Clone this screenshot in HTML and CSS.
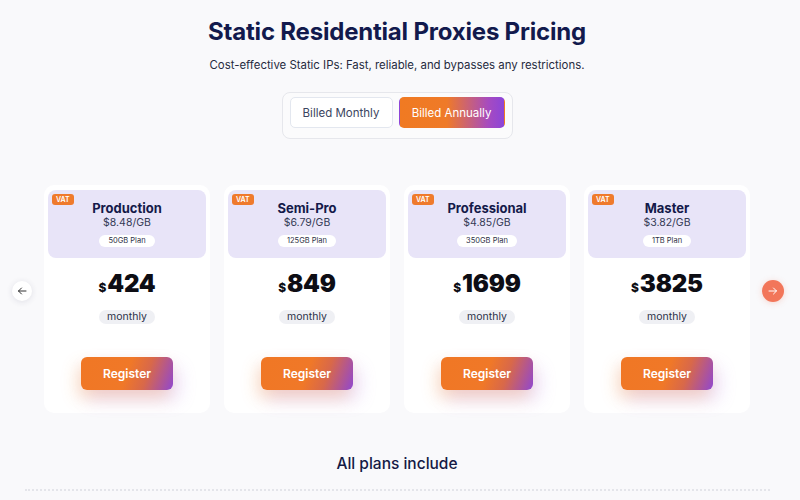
FILE: index.html
```html
<!DOCTYPE html>
<html lang="en">
<head>
<meta charset="utf-8">
<title>Static Residential Proxies Pricing</title>
<link rel="stylesheet" href="styles.css">
</head>
<body>
<main class="pricing">
  <h1 class="title">Static Residential Proxies Pricing</h1>
  <p class="subtitle">Cost-effective Static IPs: Fast, reliable, and bypasses any restrictions.</p>

  <div class="toggle">
    <button class="toggle-btn monthly">Billed Monthly</button>
    <button class="toggle-btn annually active">Billed Annually</button>
  </div>

  <section class="carousel">
    <button class="nav nav-prev" aria-label="Previous">
      <svg width="10" height="10" viewBox="0 0 10 10"><path d="M9 5H1.5M4.5 2L1.5 5l3 3" fill="none" stroke="#333" stroke-width="1" stroke-linecap="round" stroke-linejoin="round"/></svg>
    </button>

    <div class="cards">
      <article class="card">
        <div class="card-head">
          <span class="vat">VAT</span>
          <h2 class="plan-name">Production</h2>
          <div class="per-gb">$8.48/GB</div>
          <span class="plan-size">50GB Plan</span>
        </div>
        <div class="price"><span class="cur">$</span>424</div>
        <span class="period">monthly</span>
        <button class="register">Register</button>
      </article>
      <article class="card">
        <div class="card-head">
          <span class="vat">VAT</span>
          <h2 class="plan-name">Semi-Pro</h2>
          <div class="per-gb">$6.79/GB</div>
          <span class="plan-size">125GB Plan</span>
        </div>
        <div class="price"><span class="cur">$</span>849</div>
        <span class="period">monthly</span>
        <button class="register">Register</button>
      </article>
      <article class="card">
        <div class="card-head">
          <span class="vat">VAT</span>
          <h2 class="plan-name">Professional</h2>
          <div class="per-gb">$4.85/GB</div>
          <span class="plan-size">350GB Plan</span>
        </div>
        <div class="price"><span class="cur">$</span>1699</div>
        <span class="period">monthly</span>
        <button class="register">Register</button>
      </article>
      <article class="card">
        <div class="card-head">
          <span class="vat">VAT</span>
          <h2 class="plan-name">Master</h2>
          <div class="per-gb">$3.82/GB</div>
          <span class="plan-size">1TB Plan</span>
        </div>
        <div class="price"><span class="cur">$</span>3825</div>
        <span class="period">monthly</span>
        <button class="register">Register</button>
      </article>
    </div>

    <button class="nav nav-next" aria-label="Next">
      <svg width="10" height="10" viewBox="0 0 10 10"><path d="M1 5h7.5M5.5 2l3 3-3 3" fill="none" stroke="#fff" stroke-width="1" stroke-linecap="round" stroke-linejoin="round"/></svg>
    </button>
  </section>

  <h3 class="includes">All plans include</h3>
  <div class="divider"></div>
</main>
</body>
</html>
```

FILE: styles.css
```css
* { box-sizing: border-box; }

body {
  margin: 0;
  background: #f9f9fb;
  font-family: "Inter", "Open Sans", sans-serif;
  color: #141a45;
}

.pricing {
  width: 800px;
  height: 500px;
  overflow: hidden;
  display: flex;
  flex-direction: column;
  align-items: center;
}

.title {
  margin: 15px 0 0 -6px;
  font-size: 24px;
  line-height: 34px;
  font-weight: 700;
  letter-spacing: -0.2px;
  color: #121a4d;
}

.subtitle {
  margin: 7px 0 0 -6px;
  font-size: 11.4px;
  line-height: 18px;
  color: #262b40;
}

.toggle {
  margin: 18px 0 0 -6px;
  display: flex;
  gap: 6px;
  padding: 4px 7px 10px;
  border: 1px solid #e6e7ec;
  border-radius: 8px;
  background: #fbfbfc;
}

.toggle-btn {
  height: 31px;
  padding: 0;
  border: 1px solid #e3e7ef;
  border-radius: 5px;
  background: #fff;
  font-family: inherit;
  font-size: 11.5px;
  color: #3b4460;
}

.toggle-btn.monthly { width: 103px; }
.toggle-btn.annually { width: 106px; }

.toggle-btn.active {
  border-color: transparent;
  color: #fff;
  background: linear-gradient(90deg, #f07a22 0%, #ef7a28 45%, #a64bc0 85%, #8c45d8 100%);
}

.carousel {
  margin-top: 46px;
  align-self: stretch;
  display: flex;
  align-items: center;
  padding-left: 12px;
  gap: 12px;
}

.nav {
  width: 20px;
  height: 20px;
  border: none;
  border-radius: 50%;
  padding: 0;
  display: flex;
  align-items: center;
  justify-content: center;
  margin-top: -16px;
  background: #fff;
  box-shadow: 0 1px 6px rgba(40, 40, 80, 0.12);
}

.nav-next {
  width: 22px;
  height: 22px;
  background: #f2765a;
  box-shadow: 0 1px 6px rgba(240, 110, 80, 0.25);
}

.cards {
  display: flex;
  gap: 14px;
}

.card {
  width: 166px;
  height: 228px;
  padding: 5px 4px;
  background: #fff;
  border-radius: 10px;
  display: flex;
  flex-direction: column;
  align-items: center;
}

.card-head {
  position: relative;
  align-self: stretch;
  height: 68px;
  border-radius: 8px;
  background: #e8e4f8;
  display: flex;
  flex-direction: column;
  align-items: center;
  padding-top: 11px;
}

.vat {
  position: absolute;
  left: 4px;
  top: 4px;
  padding: 0 4px;
  height: 11px;
  line-height: 11px;
  border-radius: 3px;
  background: #ef7a2c;
  color: #fff;
  font-size: 7px;
  font-weight: 600;
}

.plan-name {
  margin: 0;
  font-size: 13px;
  line-height: 15px;
  font-weight: 700;
  color: #141a4a;
}

.per-gb {
  font-size: 10.5px;
  line-height: 13px;
  color: #343a55;
}

.plan-size {
  margin-top: 6px;
  height: 12px;
  line-height: 12px;
  padding: 0 9px;
  border-radius: 6px;
  background: #fff;
  font-size: 7.5px;
  color: #2d3046;
}

.price {
  margin-top: 11px;
  font-size: 24px;
  line-height: 30px;
  font-weight: 900;
  color: #0d0d14;
  letter-spacing: -0.2px;
}

.price .cur {
  font-size: 12px;
  font-weight: 800;
  margin-right: 1px;
}

.period {
  margin-top: 7px;
  height: 14px;
  line-height: 14px;
  padding: 0 8px;
  border-radius: 7px;
  background: #eff0f4;
  font-size: 10.5px;
  color: #2c3048;
}

.register {
  margin-top: 33px;
  width: 92px;
  height: 33px;
  border: none;
  border-radius: 6px;
  font-family: inherit;
  font-size: 12px;
  font-weight: 600;
  color: #fff;
  background: linear-gradient(110deg, #f07724 0%, #f07828 50%, #d8684a 70%, #9047d0 100%);
  box-shadow: -4px 8px 16px rgba(248, 150, 60, 0.28), 6px 10px 18px rgba(170, 110, 230, 0.22);
}

.includes {
  margin: 41px 0 0 -6px;
  font-size: 15.5px;
  line-height: 20px;
  font-weight: 500;
  color: #141a45;
}

.divider {
  margin-top: 15px;
  width: 745px;
  margin-left: -5px;
  border-top: 2px dotted #e4e5ea;
}
```
